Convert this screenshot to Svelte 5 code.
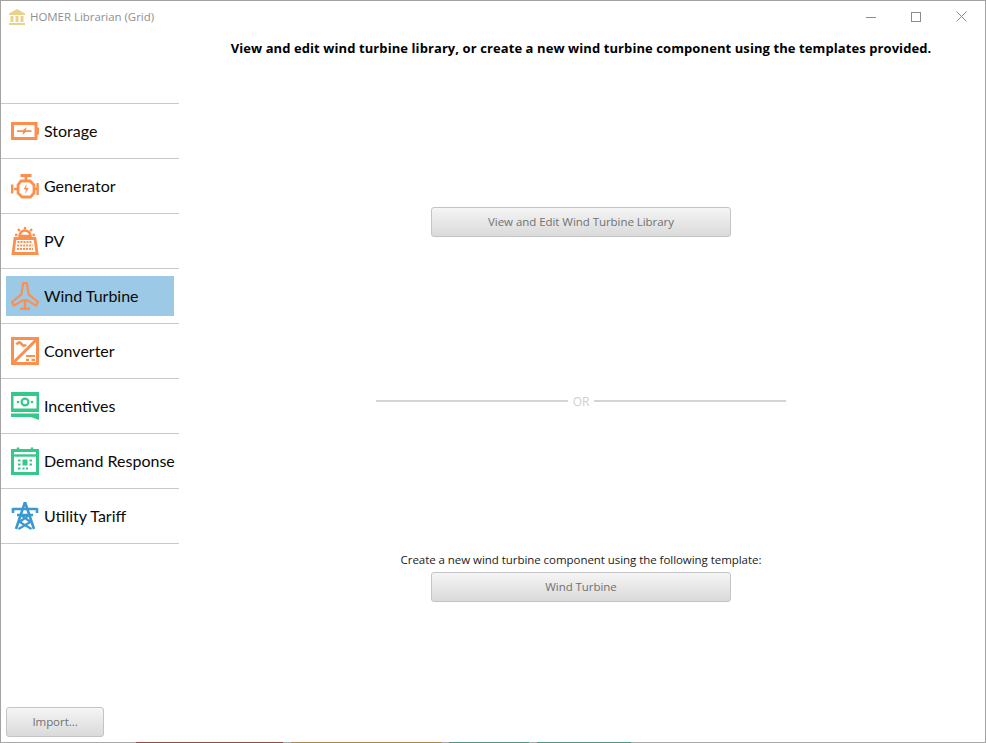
<script lang="ts">
	const orange = '#fd8f4e';
	const green = '#35c88b';
	const blue = '#3b98d0';

	const items = [
		{ name: 'Storage', icon: 'storage', color: orange },
		{ name: 'Generator', icon: 'generator', color: orange },
		{ name: 'PV', icon: 'pv', color: orange },
		{ name: 'Wind Turbine', icon: 'wind', color: orange, active: true },
		{ name: 'Converter', icon: 'converter', color: orange },
		{ name: 'Incentives', icon: 'incentives', color: green },
		{ name: 'Demand Response', icon: 'demand', color: green },
		{ name: 'Utility Tariff', icon: 'utility', color: blue }
	];

	// bits of the window behind, showing along the bottom edge
	const strip = [
		{ w: 135, c: '#a9a9a9' },
		{ w: 147, c: '#8f4a4a' },
		{ w: 8, c: '#a9a9a9' },
		{ w: 151, c: '#a68a45' },
		{ w: 7, c: '#a9a9a9' },
		{ w: 80, c: '#4f9680' },
		{ w: 8, c: '#a9a9a9' },
		{ w: 94, c: '#4f9680' },
		{ w: 356, c: '#a9a9a9' }
	];
</script>

<div class="window">
	<header class="titlebar">
		<svg class="app-icon" viewBox="0 0 16 16" width="16" height="16">
			<path d="M8 0 L16 4.5 V6 H0 V4.5 Z" fill="#e9d28c" />
			<path d="M1.5 7 H4.5 V13 H1.5 Z M6.5 7 H9.5 V13 H6.5 Z M11.5 7 H14.5 V13 H11.5 Z" fill="#e9d28c" />
			<path d="M0 14 H16 V16 H0 Z" fill="#e9d28c" />
		</svg>
		<span class="title">HOMER Librarian (Grid)</span>
		<div class="controls">
			<svg viewBox="0 0 10 10" width="10" height="10"><path d="M0 5.5 H10" stroke="#8c8c8c" fill="none" /></svg>
			<svg viewBox="0 0 10 10" width="10" height="10"><rect x="0.5" y="0.5" width="9" height="9" stroke="#8c8c8c" fill="none" /></svg>
			<svg viewBox="0 0 11 11" width="11" height="11"><path d="M0.5 0.5 L10.5 10.5 M10.5 0.5 L0.5 10.5" stroke="#8c8c8c" fill="none" /></svg>
		</div>
	</header>

	<div class="body">
		<aside class="sidebar">
			<nav class="list">
				{#each items as item}
					<div class="row">
						<div class="item" class:active={item.active}>
							<svg class="icon" viewBox="0 0 28 28" width="28" height="28" style="color: {item.color}">
								{#if item.icon === 'storage'}
									<rect x="1.5" y="6.5" width="23.5" height="15" fill="none" stroke="currentColor" stroke-width="3" />
									<rect x="26" y="10.5" width="2" height="7" fill="currentColor" />
									<path d="M6 13.2 H12 L15.5 10 L15 13.2 H20.5 V15 H15 L11.5 18 L12 15 H6 Z" fill="currentColor" />
								{:else if item.icon === 'generator'}
									<path d="M9.5 3.5 H20.5 M15 3.5 V8.5" fill="none" stroke="currentColor" stroke-width="2.8" />
									<path d="M10 9 H19 L23 13 V21 L19.5 25 H11 L7 21 V13 Z" fill="none" stroke="currentColor" stroke-width="2.8" />
									<path d="M1.2 12.5 V21.5 M3 17 H7" fill="none" stroke="currentColor" stroke-width="2.4" />
									<path d="M26.6 11 V23 M23 17 H26" fill="none" stroke="currentColor" stroke-width="2.4" />
									<path d="M15.6 12 L12.6 17.6 H15 L14 22 L17.6 16 H15.2 Z" fill="currentColor" />
								{:else if item.icon === 'pv'}
									<path d="M8.5 9 A5.5 5.5 0 0 1 19.5 9 Z" fill="none" stroke="currentColor" stroke-width="2.6" />
									<path d="M14 0 V2.5 M7 2 L8.8 4 M21 2 L19.2 4 M4 8 H6.5 M21.5 8 H24" stroke="currentColor" stroke-width="2.4" fill="none" />
									<path d="M4 11.5 H24 L26 26.5 H2 Z" fill="none" stroke="currentColor" stroke-width="2.8" />
									<path d="M6.5 15 H21.5 M6.2 18.5 H21.8 M6 22 H22" stroke="currentColor" stroke-width="2" stroke-dasharray="2 1" fill="none" />
								{:else if item.icon === 'wind'}
									<path d="M12.2 1.2 H15.8 L17.6 12.4 L27 20 L25 23.6 L16.4 18.4 H11.6 L3 23.6 L1 20 L10.4 12.4 Z" fill="none" stroke="currentColor" stroke-width="2.2" stroke-linejoin="round" />
									<path d="M14 18.5 V27 M9 26.8 H19" stroke="currentColor" stroke-width="2.6" fill="none" />
								{:else if item.icon === 'converter'}
									<rect x="1.5" y="1.5" width="25" height="25" fill="none" stroke="currentColor" stroke-width="3" />
									<path d="M1.5 26.5 L26.5 1.5" stroke="currentColor" stroke-width="3" fill="none" />
									<path d="M5.5 7.5 C7.5 4.5 9 5 10.5 7 C12 9 13.5 9.4 15 7.5" stroke="currentColor" stroke-width="2.6" fill="none" />
									<path d="M15 18 H24 V20 H15 Z M15 21.8 H18 V24 H15 Z M20.5 21.8 H24 V24 H20.5 Z" fill="currentColor" />
								{:else if item.icon === 'incentives'}
									<path d="M0 0 H28 V20 H0 Z" fill="currentColor" />
									<path d="M2.5 4 H25.5 V16.5 H2.5 Z" fill="#fff" />
									<circle cx="14" cy="10" r="3.4" fill="none" stroke="currentColor" stroke-width="2.2" />
									<circle cx="7" cy="10" r="1.3" fill="currentColor" />
									<circle cx="21" cy="10" r="1.3" fill="currentColor" />
									<path d="M0 21.5 H28 V28 L20 25 H0 Z" fill="currentColor" />
								{:else if item.icon === 'demand'}
									<rect x="1.5" y="3.5" width="25" height="23" fill="none" stroke="currentColor" stroke-width="3" />
									<path d="M1 8.5 H27" stroke="currentColor" stroke-width="2.4" fill="none" />
									<path d="M7 0.5 V5 M21 0.5 V5" stroke="currentColor" stroke-width="2.4" fill="none" />
									<path d="M11.5 12.5 H16.5 V18.5 H11.5 Z" fill="currentColor" />
									<path d="M7 12.5 H9.5 V14.5 H7 Z M7 16.5 H9.5 V18.5 H7 Z M18.5 12.5 H21 V14.5 H18.5 Z M18.5 16.5 H21 V18.5 H18.5 Z M11.5 20.5 H13.5 V22.5 H11.5 Z M15 20.5 H17 V22.5 H15 Z M7 20.5 H9.5 V22.5 H7 Z" fill="currentColor" />
								{:else if item.icon === 'utility'}
									<path d="M14 0 L17 9 L23 27 M14 0 L11 9 L5 27" stroke="currentColor" stroke-width="2.6" fill="none" />
									<path d="M2 7 H26 M2 6 V11 M26 6 V11 M6 13 H22" stroke="currentColor" stroke-width="2.6" fill="none" />
									<path d="M10 13 L19.5 20 L7.5 27 M18 13 L8.5 20 L20.5 27" stroke="currentColor" stroke-width="2.2" fill="none" />
								{/if}
							</svg>
							<span class="label">{item.name}</span>
						</div>
					</div>
				{/each}
			</nav>
			<button class="btn import">Import...</button>
		</aside>

		<main class="main">
			<h1 class="heading">View and edit wind turbine library, or create a new wind turbine component using the templates provided.</h1>
			<button class="btn wide library">View and Edit Wind Turbine Library</button>
			<div class="or"><span class="line"></span><span class="or-text">OR</span><span class="line"></span></div>
			<p class="hint">Create a new wind turbine component using the following template:</p>
			<button class="btn wide">Wind Turbine</button>
		</main>
	</div>

	<div class="strip">
		{#each strip as s}
			<span style="width: {s.w}px; background: {s.c}"></span>
		{/each}
	</div>
</div>

<style>
	:global(body) {
		margin: 0;
		background: #fff;
	}
	.window {
		width: 986px;
		height: 743px;
		box-sizing: border-box;
		display: flex;
		flex-direction: column;
		background: #fff;
		border-top: 1px solid #a3a3a3;
		border-left: 1px solid #a3a3a3;
		border-right: 1px solid #a3a3a3;
		font-family: 'Open Sans', 'Liberation Sans', sans-serif;
		overflow: hidden;
	}
	.titlebar {
		height: 31px;
		flex: none;
		display: flex;
		align-items: center;
		padding-left: 8px;
	}
	.app-icon {
		margin-right: 5px;
	}
	.title {
		font-size: 11.5px;
		letter-spacing: -0.05px;
		color: #8f8f8f;
	}
	.controls {
		margin-left: auto;
		display: flex;
		align-items: center;
		gap: 35px;
		padding-right: 18px;
	}
	.body {
		flex: 1;
		display: flex;
		min-height: 0;
	}
	.sidebar {
		width: 178px;
		flex: none;
		display: flex;
		flex-direction: column;
		padding-top: 71px;
		box-sizing: border-box;
	}
	.list {
		border-top: 1px solid #c9c9c9;
	}
	.row {
		padding: 7px 5px;
		border-bottom: 1px solid #c9c9c9;
	}
	.item {
		height: 40px;
		display: flex;
		align-items: center;
		gap: 5px;
		padding-left: 5px;
	}
	.item.active {
		background: #9bc9e6;
	}
	.icon {
		flex: none;
	}
	.label {
		font-family: Lato, 'Liberation Sans', sans-serif;
		font-size: 16px;
		color: #0a0a0a;
		white-space: nowrap;
		padding-bottom: 2px;
	}
	.btn {
		display: block;
		height: 30px;
		box-sizing: border-box;
		padding: 0 0 1px;
		border: 1px solid #c4c4c4;
		border-radius: 3px;
		background: linear-gradient(#f5f5f5, #dadada);
		color: #717171;
		font-family: 'Open Sans', 'Liberation Sans', sans-serif;
		font-size: 11.5px;
		letter-spacing: -0.05px;
	}
	.import {
		width: 98px;
		margin: auto 0 5px 5px;
	}
	.main {
		flex: 1;
		display: flex;
		flex-direction: column;
		align-items: center;
		padding-right: 2px;
	}
	.heading {
		margin: 7px 0 0;
		font-size: 13px;
		letter-spacing: 0.085px;
		line-height: 18px;
		font-weight: 700;
		color: #000;
		white-space: nowrap;
	}
	.wide {
		width: 300px;
	}
	.library {
		margin-top: 150px;
	}
	.or {
		width: 410px;
		margin-top: 155px;
		display: flex;
		align-items: center;
		gap: 5px;
		height: 18px;
	}
	.line {
		flex: 1;
		height: 2px;
		background: #d4d4d4;
	}
	.or-text {
		font-size: 12px;
		color: #cfcfcf;
	}
	.hint {
		margin: 141px 0 4px;
		font-size: 11.5px;
		letter-spacing: -0.05px;
		line-height: 17px;
		color: #1a1a1a;
	}
	.strip {
		height: 1px;
		flex: none;
		display: flex;
	}
	.strip span {
		display: block;
		flex: none;
	}
</style>
